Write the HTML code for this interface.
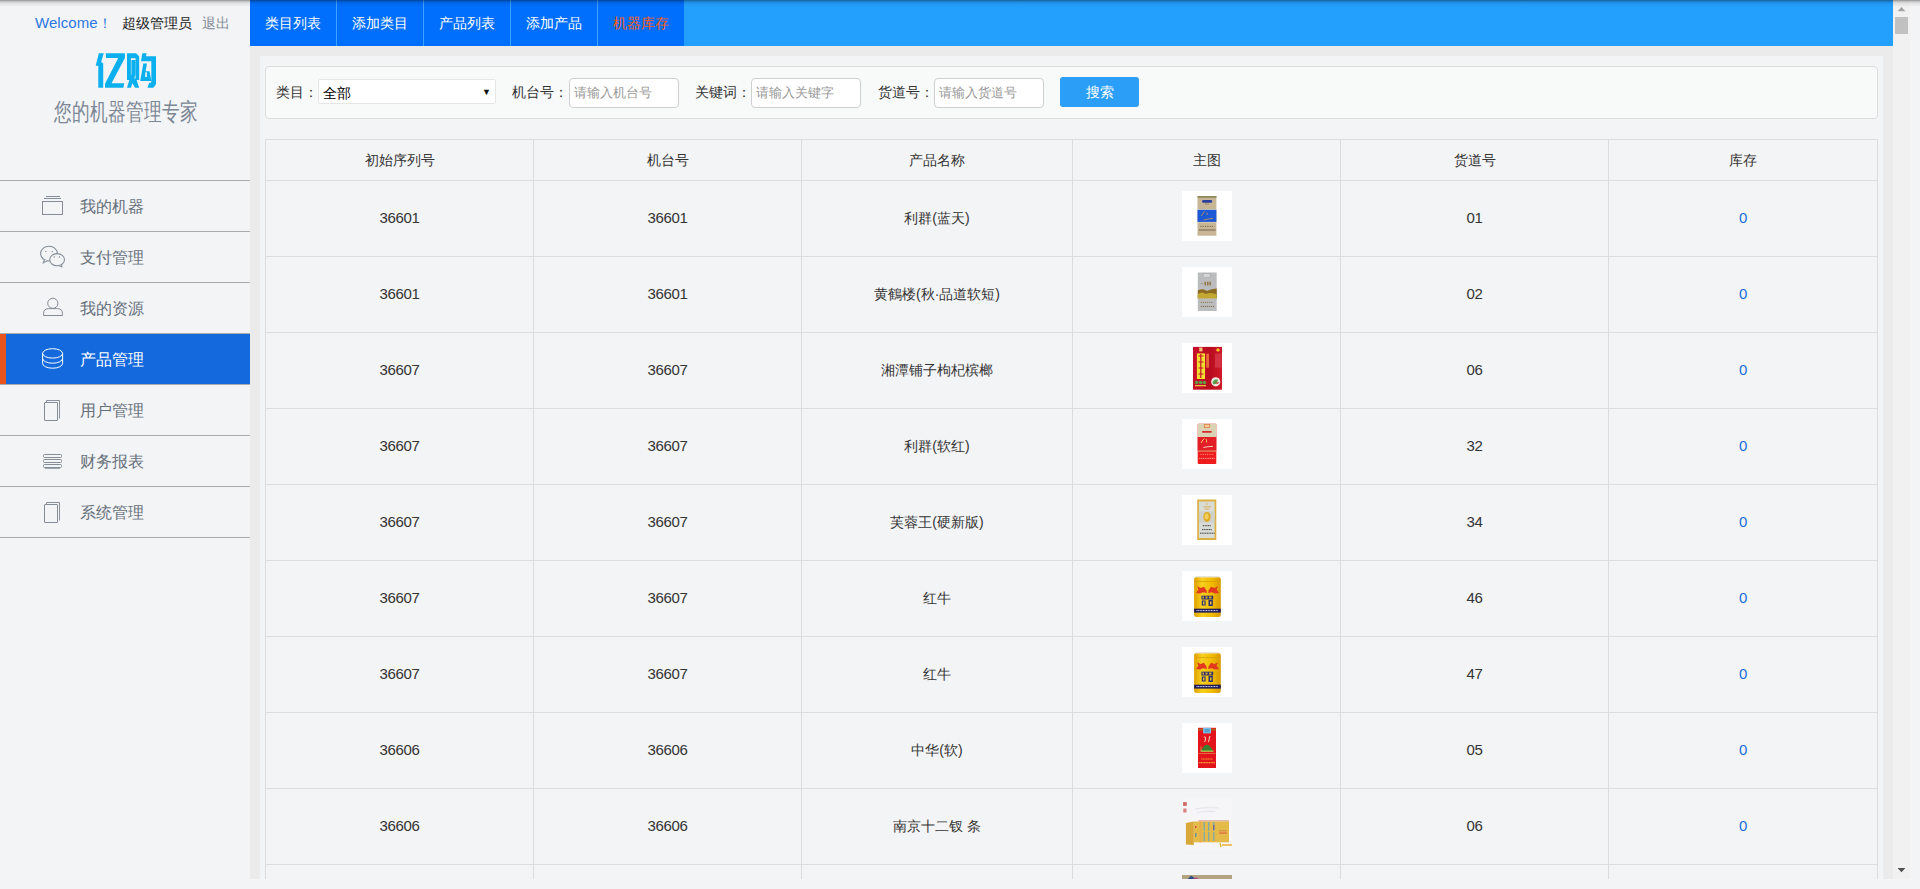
<!DOCTYPE html>
<html><head><meta charset="utf-8">
<style>
*{box-sizing:border-box;margin:0;padding:0}
html,body{width:1920px;height:889px;overflow:hidden;background:#f3f4f6;font-family:"Liberation Sans",sans-serif;font-size:14px;color:#333}
#side{position:absolute;left:0;top:0;width:250px;height:889px;background:#f3f4f6}
#welcome span{position:absolute;top:14px;white-space:nowrap;font-size:14px;line-height:18px}
#welcome .w{color:#2b78e2}
#welcome .u{color:#222}
#welcome .o{color:#808a95}
#logo{position:absolute;left:90px;top:48px}
#tag{position:absolute;left:54px;top:98px;width:142px;height:28px;font-size:17.6px;font-weight:500;color:#7b8794;white-space:nowrap;line-height:28px;transform:scaleY(1.36);transform-origin:0 50%}
#menu{position:absolute;left:0;top:180px;width:250px;border-top:1px solid #aaa}
#icons{z-index:5}
.mi{position:relative;height:51px;border-bottom:1px solid #aaa;color:#66707b;font-size:16px}
.mi span{position:absolute;left:80px;top:16px;line-height:20px}
.mi svg{position:absolute;left:38px;top:12px}
.mi.act{background:#1469dc;color:#fff}
.mi.act:before{content:"";position:absolute;left:0;top:0;width:6px;height:50px;background:#e8541b}
#frame{position:absolute;left:250px;top:0;width:1660px;height:879px;background:#ebebeb;overflow:hidden}
#nav{position:absolute;left:0;top:0;width:1643px;height:46px;background:#23a0fe}
.tab{position:absolute;top:0;height:46px;width:87px;background:#006ffe;border-right:1px solid #3ea3ff;color:#fff;text-align:center;line-height:46px;font-size:14px}
.tab.last{width:86px;border-right:0;color:#ff5c0a}
#card{position:absolute;left:10px;top:56px;width:1623px;height:900px;background:#f3f4f6}
#search{position:absolute;left:5px;top:10px;width:1613px;height:53px;background:#f8f9f9;border:1px solid #dcdcdc;border-radius:4px}
.lbl{position:absolute;top:16px;line-height:18px;color:#333;white-space:nowrap}
.sel{position:absolute;left:52px;top:12px;width:178px;height:25px;background:#fff;border:1px solid #e6e6e6;border-radius:2px;color:#000;line-height:26px;padding-left:4px}
.sel i{position:absolute;right:4px;top:-1px;font-style:normal;font-size:9px;color:#111}
.inp{position:absolute;top:11px;width:110px;height:30px;background:#fff;border:1px solid #cfcfcf;border-radius:4px;color:#999;line-height:28px;padding-left:4px;font-size:13px}
.btn{position:absolute;left:794px;top:10px;width:79px;height:30px;background:#2b9ef8;border-radius:3px;color:#fff;text-align:center;line-height:30px}
#tbl{position:absolute;left:5px;top:83px;border-collapse:collapse;table-layout:fixed}
#tbl td,#tbl th{border:1px solid #dcdcdc;text-align:center;font-weight:normal;color:#333;font-size:14px;vertical-align:middle}
#tbl th{height:41px}
#tbl td{height:76px}
#tbl td.z{color:#1a6fd8}
#tbl td.n{font-size:15px;letter-spacing:-.3px;padding-bottom:2px}
#tbl th{padding-top:2px}
.pic{display:inline-block;width:50px;height:50px;background:#fff;position:relative;vertical-align:middle;margin-top:-6px}
.pic svg{display:block}
#sb{position:absolute;left:1643px;top:0;width:17px;height:879px;background:#f1f1f1}
#shadow{position:absolute;left:0;top:0;width:1920px;height:7px;background:linear-gradient(rgba(0,0,0,.4),rgba(0,0,0,.2) 1.5px,rgba(0,0,0,.08) 3px,rgba(0,0,0,0) 7px)}
</style></head><body>
<div id="side">
 <div id="welcome"><span class="w" style="left:35px;top:14px;font-size:15px;letter-spacing:.05px">Welcome</span><span class="w" style="left:98px;top:14px">！</span><span class="u" style="left:122px">超级管理员</span><span class="o" style="left:202px">退出</span></div>
 <svg id="logo" viewBox="0 0 1391 889" width="72" height="46"><g fill="#0cb0ee">
<path d="M170 100H265L215 270L255 295V770H160V345H110Z"/>
<path d="M305 100H675V195L415 680H660L645 770H290V690L545 195H310Z"/>
<path fill-rule="evenodd" d="M715 100H890L950 160V620H900L950 770H870L820 680L790 770H715L760 620H715Z M790 200H880V590H855L875 520V230H800V510L790 520Z"/>
<path fill-rule="evenodd" d="M1010 100H1095L1080 160H1275V700L1225 770H1110L1140 680L1185 660V255H985Z M1030 300H1100L1075 450H1150L1185 640H970Z M1070 470H1100V560H1065Z"/>
</g></svg>
 <div id="tag">您的机器管理专家</div>
<svg id="icons" width="250" height="889" style="position:absolute;left:0;top:0" fill="none" stroke="#838c97" stroke-width="1">
<rect x="42.5" y="201.5" width="20" height="13"/>
<path d="M44 198.5H61M46 196.5H60"/>
<g stroke-width="1.05">
<ellipse cx="49" cy="253.6" rx="8.4" ry="7.3"/>
<path d="M44.6 259.6L43.2 262.8L47.6 260.6" fill="#f3f4f6"/>
<circle cx="45.9" cy="251.6" r=".7" fill="#838c97" stroke="none"/><circle cx="52.3" cy="251.6" r=".7" fill="#838c97" stroke="none"/>
<ellipse cx="57.1" cy="259.7" rx="7.4" ry="6.1" fill="#f3f4f6"/>
<path d="M59 265.6L61.8 266.8L61.4 264.2" fill="#f3f4f6"/>
<circle cx="54.2" cy="257" r=".7" fill="#838c97" stroke="none"/><circle cx="59.4" cy="257" r=".7" fill="#838c97" stroke="none"/>
</g>
<circle cx="52.8" cy="303.3" r="5.1"/>
<path d="M43.6 315.5V313.2Q43.6 308.8 48.5 308.6H57.5Q62.4 308.8 62.4 313.2V315.5Z"/>
<g stroke="#fff"><ellipse cx="52.6" cy="353.4" rx="10" ry="4.7"/>
<path d="M42.6 353.4V358.4A10 4.8 0 0 0 62.6 358.4V353.4M42.6 358.4V363.4A10 4.8 0 0 0 62.6 363.4V358.4"/></g>
<rect x="44.5" y="402.5" width="13" height="18" rx=".5"/>
<path d="M46.5 402V400.5H59.5V418.5" stroke="#8a939d"/>
<rect x="43.5" y="454.5" width="18" height="3" rx="1"/>
<rect x="43.5" y="459.5" width="18" height="3" rx="1"/>
<rect x="43.5" y="464.5" width="18" height="3" rx="1"/>
<path d="M45 468.5H60" stroke="#a0a8b1"/>
<rect x="44.5" y="504.5" width="13" height="18" rx=".5"/>
<path d="M46.5 504V502.5H59.5V520.5" stroke="#8a939d"/>
</svg>
 <div id="menu">
  <div class="mi"><svg width="26" height="26"></svg><span>我的机器</span></div>
  <div class="mi"><svg width="30" height="26"></svg><span>支付管理</span></div>
  <div class="mi"><svg width="26" height="26"></svg><span>我的资源</span></div>
  <div class="mi act"><svg width="26" height="26"></svg><span>产品管理</span></div>
  <div class="mi"><svg width="26" height="26"></svg><span>用户管理</span></div>
  <div class="mi"><svg width="26" height="26"></svg><span>财务报表</span></div>
  <div class="mi"><svg width="26" height="26"></svg><span>系统管理</span></div>
 </div>
</div>
<div id="frame">
 <div id="nav">
  <div class="tab" style="left:0">类目列表</div>
  <div class="tab" style="left:87px">添加类目</div>
  <div class="tab" style="left:174px">产品列表</div>
  <div class="tab" style="left:261px">添加产品</div>
  <div class="tab last" style="left:348px">机器库存</div>
 </div>
 <div id="card">
  <div id="search">
   <div class="lbl" style="left:10px">类目：</div>
   <div class="sel">全部<i>▼</i></div>
   <div class="lbl" style="left:246px">机台号：</div>
   <div class="inp" style="left:303px">请输入机台号</div>
   <div class="lbl" style="left:429px">关键词：</div>
   <div class="inp" style="left:485px">请输入关键字</div>
   <div class="lbl" style="left:612px">货道号：</div>
   <div class="inp" style="left:668px">请输入货道号</div>
   <div class="btn">搜索</div>
  </div>
  <table id="tbl">
   <colgroup><col style="width:268px"><col style="width:268px"><col style="width:271px"><col style="width:268px"><col style="width:268px"><col style="width:269px"></colgroup>
   <tr><th>初始序列号</th><th>机台号</th><th>产品名称</th><th>主图</th><th>货道号</th><th>库存</th></tr>
   <tr><td class="n">36601</td><td class="n">36601</td><td>利群(蓝天)</td><td><span class="pic"><svg width="50" height="50"><rect x="15.5" y="5" width="18.9" height="39.7" fill="#c8b595"/><rect x="15.5" y="5" width="18.9" height="1.8" fill="#8d8a5e"/><rect x="20" y="9" width="10.2" height="2.8" rx="1.4" fill="#2a3f9e"/><rect x="23" y="12.6" width="4" height=".8" fill="#8a7a60"/><rect x="15.5" y="18" width="18.9" height=".8" fill="#e2dccb"/><rect x="15.5" y="18.8" width="18.9" height="12.1" fill="#1d58d6"/><path d="M19.5 25Q21 21 23 20.5M25 21.5Q25.5 23 25 24M21.5 29Q26 28 31 27.3" stroke="#b58e5a" stroke-width=".9" fill="none"/><rect x="15.5" y="31" width="18.9" height=".7" fill="#d8cfbc"/><path d="M18.3 35.4H32.3" stroke="#6b5c48" stroke-width=".9" stroke-dasharray="1.2 1.1"/><path d="M17.2 39H33.6" stroke="#5a4c3a" stroke-width="1" stroke-dasharray="1.5 .5"/></svg></span></td><td class="n">01</td><td class="z n">0</td></tr>
   <tr><td class="n">36601</td><td class="n">36601</td><td>黄鶴楼(秋·品道软短)</td><td><span class="pic"><svg width="50" height="50"><rect x="15.8" y="5.5" width="18.9" height="38.5" fill="#babcbe"/><rect x="21.1" y="6.7" width="7" height="4" fill="#d3d4d5" stroke="#9a9a9a" stroke-width=".4"/><rect x="19" y="16" width="1.6" height=".8" fill="#8a7a50"/><rect x="22.5" y="14.8" width="1.5" height="3.6" fill="#8f7440"/><rect x="25" y="14.8" width="1.5" height="3.6" fill="#8f7440"/><rect x="27.4" y="14.8" width="1.5" height="3.6" fill="#8f7440"/><path d="M15.8 23.5Q21 21 25 24Q29 21.5 34.7 21.5V31.4H15.8Z" fill="#8c6a22"/><path d="M15.8 27Q20 24 24 27Q28 25 34.7 27.5V31.4H15.8Z" fill="#c2a832"/><rect x="15.8" y="31.4" width="18.9" height=".5" fill="#d0ceb0"/><path d="M18.8 35.4H31.3" stroke="#8a6d3a" stroke-width="1" stroke-dasharray="1 1.1"/><path d="M18.8 39.4H32" stroke="#7a6035" stroke-width="1" stroke-dasharray="1.1 .9"/></svg></span></td><td class="n">02</td><td class="z n">0</td></tr>
   <tr><td class="n">36607</td><td class="n">36607</td><td>湘潭铺子枸杞槟榔</td><td><span class="pic"><svg width="50" height="50"><defs><linearGradient id="g3" x1="0" x2="1"><stop offset="0" stop-color="#c8102a"/><stop offset=".6" stop-color="#b80c1e"/><stop offset="1" stop-color="#d01a2a"/></linearGradient></defs><rect x="11" y="3.9" width="29" height="42.8" fill="url(#g3)"/><rect x="17.2" y="4.5" width="3.3" height="3.9" fill="#f0c080"/><rect x="14.9" y="10.4" width="8.1" height="25.6" fill="#f2e030"/><path d="M16.5 13H21.5M16.5 19H21.5M16.5 25H21.5M16.5 31H21.5M18.8 11V35" stroke="#c8102a" stroke-width="1.2"/><rect x="24.2" y="10.7" width="2.8" height="14" fill="#e8683a"/><rect x="33" y="10.7" width="6.4" height="14" fill="#d84050" opacity=".7"/><path d="M36 5L38.2 7L36 9L33.8 7Z" fill="#f0c020"/><circle cx="14.6" cy="39.5" r="1.8" fill="#5aa048"/><circle cx="18.5" cy="39.5" r="1.8" fill="#5aa048"/><circle cx="22.4" cy="39.5" r="1.8" fill="#5aa048"/><rect x="13" y="42" width="11" height="1.3" fill="#e8c040"/><circle cx="33.7" cy="38.8" r="4.6" fill="#f2e6e0"/><path d="M30.5 39Q33 35 36 37L35 40Q33 42 31 41Z" fill="#58a050"/><path d="M33 40L37 39L36 41Z" fill="#d03030"/></svg></span></td><td class="n">06</td><td class="z n">0</td></tr>
   <tr><td class="n">36607</td><td class="n">36607</td><td>利群(软红)</td><td><span class="pic"><svg width="50" height="50"><rect x="15.7" y="4.8" width="18.6" height="40.2" rx="1" fill="#ee1c1c"/><rect x="15.7" y="4.8" width="18.6" height="13.2" fill="#d9d2b4"/><rect x="21.9" y="5" width="6.2" height="4" fill="#e09050"/><rect x="23" y="6" width="4" height="2" fill="#f0d0a0"/><rect x="20" y="12.1" width="9.8" height="1.7" rx=".8" fill="#d42a30"/><rect x="15.7" y="18" width="18.6" height="13.5" fill="#e21f26"/><path d="M19 24Q21 20 22.5 19.5M24 20Q25 22 24.5 23.5" stroke="#f0c060" stroke-width="1" fill="none"/><path d="M21.4 28.5Q26 27.5 31 27.3" stroke="#f5e0d0" stroke-width=".9" fill="none"/><rect x="15.7" y="31.5" width="18.6" height="1.1" fill="#d8a070"/><path d="M18.5 35.4H32" stroke="#f8c0b0" stroke-width=".8" stroke-dasharray="1 1.2"/><path d="M17.2 39.4H33" stroke="#f8c0b0" stroke-width=".8" stroke-dasharray="1.2 .6"/></svg></span></td><td class="n">32</td><td class="z n">0</td></tr>
   <tr><td class="n">36607</td><td class="n">36607</td><td>芙蓉王(硬新版)</td><td><span class="pic"><svg width="50" height="50"><rect x="15.2" y="4.5" width="19.1" height="40.5" fill="#dcb040"/><rect x="16.9" y="6.5" width="15.7" height="36.5" fill="#d9dbd6"/><rect x="16.9" y="16.5" width="15.7" height="11" fill="#cfd1cb"/><circle cx="25" cy="9" r=".8" fill="#d8b060"/><rect x="21.4" y="11.2" width="7.6" height="1.2" fill="#d8b870"/><rect x="22.5" y="13.4" width="5" height="1.2" fill="#d8b870"/><ellipse cx="25" cy="21.9" rx="3.6" ry="5" fill="#e0aa20"/><ellipse cx="24.6" cy="21.5" rx="2" ry="3" fill="#f0d060"/><path d="M20.8 30.7H29.2M20 34.6H30M18 38.2H32.6" stroke="#404040" stroke-width="1" stroke-dasharray="1.2 .5"/></svg></span></td><td class="n">34</td><td class="z n">0</td></tr>
   <tr><td class="n">36607</td><td class="n">36607</td><td>红牛</td><td><span class="pic"><svg width="50" height="50"><defs><linearGradient id="g6_5" x1="0" x2="1"><stop offset="0" stop-color="#e0a000"/><stop offset=".3" stop-color="#f8d020"/><stop offset=".7" stop-color="#f0b800"/><stop offset="1" stop-color="#d89800"/></linearGradient></defs><rect x="12.1" y="6" width="26.7" height="40" rx="2.5" fill="url(#g6_5)"/><rect x="13.8" y="5" width="23.3" height="1.6" rx=".8" fill="#e8e4d8"/><rect x="12.8" y="10" width="25.4" height=".8" fill="#d8a000"/><path d="M14 22L16.5 18.5L15 15.2L18.5 17L22 15.8L24.5 19.5L24.8 22L21 21.2L18 22.5Z" fill="#e2381f"/><path d="M37 22L34.5 18.5L36 15.2L32.5 17L29 15.8L26.5 19.5L26.2 22L30 21.2L33 22.5Z" fill="#e2381f"/><path d="M19.4 24.7H31.2V28.5H19.4Z" fill="#2b2f6e"/><path d="M20.5 25.5H22V27.5H20.5ZM23.5 25.5H25.5V27.5H23.5ZM27 25.5H29.5V27.5H27Z" fill="#d8b030"/><path d="M19.8 29.5H23.6V34.5H19.8ZM26.5 29H30.8V34.9H26.5Z" fill="#2b2f6e"/><path d="M21 30.5H22.5V33.5H21ZM28 30.5H29.5V33.5H28Z" fill="#e8c040"/><rect x="12.1" y="37.7" width="26.7" height="3.9" fill="#1c1a5a"/><path d="M14.5 39.6H36" stroke="#e8e8ff" stroke-width="1" stroke-dasharray="1 .6"/></svg></span></td><td class="n">46</td><td class="z n">0</td></tr>
   <tr><td class="n">36607</td><td class="n">36607</td><td>红牛</td><td><span class="pic"><svg width="50" height="50"><defs><linearGradient id="g6_6" x1="0" x2="1"><stop offset="0" stop-color="#e0a000"/><stop offset=".3" stop-color="#f8d020"/><stop offset=".7" stop-color="#f0b800"/><stop offset="1" stop-color="#d89800"/></linearGradient></defs><rect x="12.1" y="6" width="26.7" height="40" rx="2.5" fill="url(#g6_6)"/><rect x="13.8" y="5" width="23.3" height="1.6" rx=".8" fill="#e8e4d8"/><rect x="12.8" y="10" width="25.4" height=".8" fill="#d8a000"/><path d="M14 22L16.5 18.5L15 15.2L18.5 17L22 15.8L24.5 19.5L24.8 22L21 21.2L18 22.5Z" fill="#e2381f"/><path d="M37 22L34.5 18.5L36 15.2L32.5 17L29 15.8L26.5 19.5L26.2 22L30 21.2L33 22.5Z" fill="#e2381f"/><path d="M19.4 24.7H31.2V28.5H19.4Z" fill="#2b2f6e"/><path d="M20.5 25.5H22V27.5H20.5ZM23.5 25.5H25.5V27.5H23.5ZM27 25.5H29.5V27.5H27Z" fill="#d8b030"/><path d="M19.8 29.5H23.6V34.5H19.8ZM26.5 29H30.8V34.9H26.5Z" fill="#2b2f6e"/><path d="M21 30.5H22.5V33.5H21ZM28 30.5H29.5V33.5H28Z" fill="#e8c040"/><rect x="12.1" y="37.7" width="26.7" height="3.9" fill="#1c1a5a"/><path d="M14.5 39.6H36" stroke="#e8e8ff" stroke-width="1" stroke-dasharray="1 .6"/></svg></span></td><td class="n">47</td><td class="z n">0</td></tr>
   <tr><td class="n">36606</td><td class="n">36606</td><td>中华(软)</td><td><span class="pic"><svg width="50" height="50"><rect x="16" y="4.8" width="18" height="40.2" fill="#e4141c"/><rect x="16" y="5.6" width="18" height="2" fill="#b85a20"/><rect x="21.1" y="4.8" width="7.9" height="5.6" fill="#78c0e8"/><rect x="22.5" y="6" width="5" height="3.2" fill="#3a8ac0" opacity=".6"/><path d="M22 14Q23 13 23.5 15T22.5 19M28 13Q27 15 27 17T26 19" stroke="#f0d8c0" stroke-width="1" fill="none"/><path d="M18.6 28.7Q22 21 25 21.7Q28 21.5 31.5 28.7Z" fill="#3a8030"/><path d="M19 23.5V28" stroke="#e8c060" stroke-width=".6"/><rect x="18.6" y="27.6" width="12.9" height="1.1" fill="#d8d050"/><rect x="16.5" y="30.4" width="17" height=".6" fill="#e8a050"/><path d="M19.3 36H30.7M17.2 39.6H32.8" stroke="#f0a030" stroke-width="1.1" stroke-dasharray="1.2 .4"/></svg></span></td><td class="n">05</td><td class="z n">0</td></tr>
   <tr><td class="n">36606</td><td class="n">36606</td><td>南京十二钗 条</td><td><span class="pic"><svg width="50" height="50"><rect width="50" height="50" fill="#f6f6f9"/><rect x="1.1" y="3.1" width="3.7" height="3.8" fill="#d06a6a"/><rect x="1.3" y="9.5" width="3.2" height="4" fill="#dc8080"/><path d="M13 10Q25 8 37 9M15 13.5Q23 12 33 12.5" stroke="#e6e6ea" stroke-width="1.2" fill="none"/><rect x="16.3" y="21.1" width="30.7" height="1.5" fill="#e0b0a0"/><rect x="11.8" y="22.5" width="35.2" height="20.8" fill="#e4ba48"/><path d="M3.9 24L11.8 22.5V46L3.9 45.5Z" fill="#d8a838"/><rect x="17.5" y="22.5" width="2" height="20.8" fill="#e8a850" opacity=".7"/><path d="M22.2 23V32M26.7 23V32M31.8 23V32M22.2 33V42M26.7 33V42M31.8 33V42" stroke="#80a8b0" stroke-width="1.3"/><path d="M31.8 26V31" stroke="#6a5aa0" stroke-width="1.2"/><rect x="37" y="31.2" width="8" height="1.2" fill="#d89050"/><rect x="37" y="33.5" width="8" height="1.1" fill="#e06040"/><rect x="13" y="27" width="1.5" height="2" fill="#d05040"/><rect x="13" y="34" width="1.5" height="4" fill="#7090a0"/><path d="M38 44L39 48M40 46H50" stroke="#e8b030" stroke-width="1.3"/></svg></span></td><td class="n">06</td><td class="z n">0</td></tr>
   <tr><td class="n">36606</td><td class="n">36606</td><td></td><td><span class="pic"><svg width="50" height="50"><rect width="50" height="50" fill="#b3a382"/><path d="M5.7 4L9 0.8L12.6 3L14.7 4Z" fill="#2c4a80"/><path d="M10.5 4L14 2.6L17 4Z" fill="#b04880"/></svg></span></td><td></td><td class="z"></td></tr>
  </table>
 </div>
 <div id="sb"><svg width="17" height="879" style="display:block"><path d="M4.6 11.3L8.5 7L12.4 11.3Z" fill="#a3a3a3"/><rect x="2" y="17" width="13" height="17" fill="#c1c1c1"/><path d="M4.6 868L8.5 872.3L12.4 868Z" fill="#505050"/></svg></div>
</div>
<div id="shadow"></div>
</body></html>
